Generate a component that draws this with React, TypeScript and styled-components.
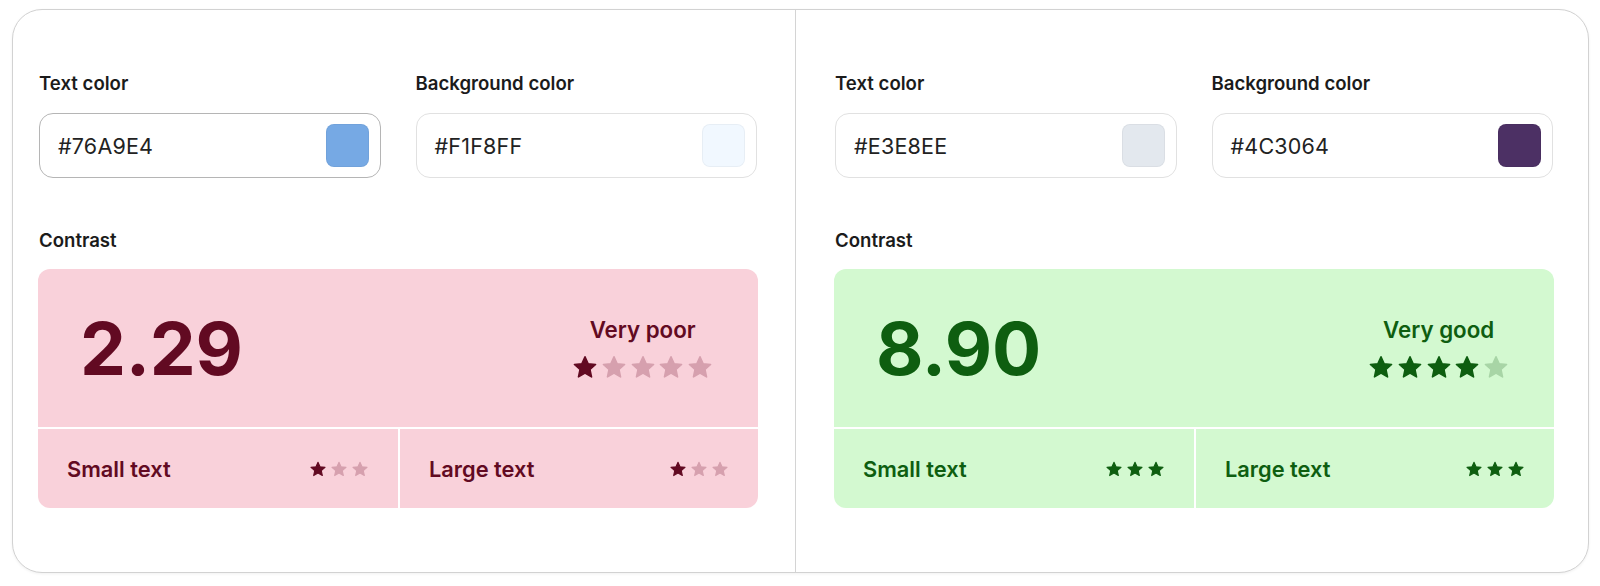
import React from "react";
import styled, { createGlobalStyle } from "styled-components";

const GlobalStyle = createGlobalStyle`
  html, body {
    margin: 0;
    padding: 0;
    background: #ffffff;
  }
  body {
    font-family: Inter, "Noto Sans", "Liberation Sans", sans-serif;
    -webkit-font-smoothing: antialiased;
  }
  * { box-sizing: border-box; }
`;

type Tone = {
  bg: string;
  ink: string;
  dim: string;
};

const TONES: Record<"bad" | "good", Tone> = {
  bad: { bg: "#f9d1da", ink: "#620a22", dim: "#d6a0ae" },
  good: { bg: "#d3f9d0", ink: "#0e5e10", dim: "#a8d5a6" },
};

const Page = styled.div`
  padding: 9px 11px 11px 12px;
`;

const Card = styled.div`
  display: grid;
  grid-template-columns: 782px 1fr;
  border: 1px solid #d2d2d2;
  border-radius: 30px;
  background: #ffffff;
  box-shadow: 0 1px 3px rgba(0, 0, 0, 0.06);
`;

const Column = styled.section<{ $divided?: boolean }>`
  display: flex;
  flex-direction: column;
  padding: ${(p) => (p.$divided ? "62px 35px 64px 39px" : "62px 38px 64px 26px")};
  border-left: ${(p) => (p.$divided ? "1px solid #d4d4d4" : "none")};
`;

const FieldRow = styled.div`
  display: grid;
  grid-template-columns: 1fr 1fr;
  column-gap: 35px;
`;

const Field = styled.div`
  display: flex;
  flex-direction: column;
  gap: 19px;
`;

const Label = styled.div`
  font-size: 18.6px;
  line-height: 22px;
  font-weight: 600;
  color: #1b1b1b;
`;

const ColorInput = styled.div<{ $focused?: boolean }>`
  height: 65px;
  display: flex;
  align-items: center;
  justify-content: space-between;
  padding: 0 11px 0 18px;
  border: 1px solid ${(p) => (p.$focused ? "#b5b5b5" : "#e1e1e1")};
  border-radius: 14px;
  background: #ffffff;
`;

const HexText = styled.span`
  font-size: 21.5px;
  font-weight: 400;
  color: #222222;
  letter-spacing: 0.2px;
`;

const Swatch = styled.span<{ $color: string }>`
  width: 43px;
  height: 43px;
  border-radius: 8px;
  background: ${(p) => p.$color};
  box-shadow: inset 0 0 0 1px rgba(0, 0, 0, 0.04);
`;

const ContrastSection = styled.div`
  display: flex;
  flex-direction: column;
  gap: 18px;
  margin-top: 51px;
`;

const ResultBox = styled.div<{ $tone: Tone }>`
  margin: 0 -1px;
  border-radius: 12px;
  overflow: hidden;
  background: ${(p) => p.$tone.bg};
  color: ${(p) => p.$tone.ink};
`;

const Summary = styled.div`
  height: 160px;
  display: flex;
  align-items: center;
  justify-content: space-between;
  padding: 0 46px 0 42px;
  border-bottom: 2px solid #ffffff;
`;

const Ratio = styled.div`
  font-size: 73px;
  line-height: 1;
  font-weight: 700;
  letter-spacing: -0.3px;
`;

const Verdict = styled.div`
  display: flex;
  flex-direction: column;
  align-items: center;
  gap: 12px;
`;

const VerdictText = styled.div`
  font-size: 22.3px;
  line-height: 26px;
  font-weight: 600;
`;

const StarRow = styled.div<{ $gap: number }>`
  display: flex;
  align-items: center;
  gap: ${(p) => p.$gap}px;
`;

const Levels = styled.div`
  height: 79px;
  display: grid;
  grid-template-columns: 1fr 1fr;
`;

const LevelCell = styled.div<{ $divided?: boolean }>`
  display: flex;
  align-items: center;
  justify-content: space-between;
  padding: 0 30px 0 29px;
  border-left: ${(p) => (p.$divided ? "2px solid #ffffff" : "none")};
`;

const LevelText = styled.span`
  font-size: 21.8px;
  font-weight: 600;
`;

// Five-pointed star with softened tips, centred in a 24-unit box
const STAR_POINTS = Array.from({ length: 10 }, (_, i) => {
  const angle = ((-90 + i * 36) * Math.PI) / 180;
  const r = i % 2 === 0 ? 11.1 : 5.2;
  return `${(12 + r * Math.cos(angle)).toFixed(2)},${(12.9 + r * Math.sin(angle)).toFixed(2)}`;
}).join(" ");

const Star = ({ size, color }: { size: number; color: string }) => (
  <svg width={size} height={size} viewBox="0 0 24 24" aria-hidden="true">
    <polygon
      points={STAR_POINTS}
      fill={color}
      stroke={color}
      strokeWidth={1.6}
      strokeLinejoin="round"
    />
  </svg>
);

const Stars = ({
  total,
  filled,
  size,
  gap,
  tone,
}: {
  total: number;
  filled: number;
  size: number;
  gap: number;
  tone: Tone;
}) => (
  <StarRow $gap={gap}>
    {Array.from({ length: total }, (_, i) => (
      <Star key={i} size={size} color={i < filled ? tone.ink : tone.dim} />
    ))}
  </StarRow>
);

type PanelData = {
  text: string;
  background: string;
  focused?: boolean;
  ratio: string;
  verdict: string;
  rating: number;
  small: number;
  large: number;
  tone: Tone;
};

const PANELS: PanelData[] = [
  {
    text: "#76A9E4",
    background: "#F1F8FF",
    focused: true,
    ratio: "2.29",
    verdict: "Very poor",
    rating: 1,
    small: 1,
    large: 1,
    tone: TONES.bad,
  },
  {
    text: "#E3E8EE",
    background: "#4C3064",
    ratio: "8.90",
    verdict: "Very good",
    rating: 4,
    small: 3,
    large: 3,
    tone: TONES.good,
  },
];

const Panel = ({ data, divided }: { data: PanelData; divided?: boolean }) => (
  <Column $divided={divided}>
    <FieldRow>
      <Field>
        <Label>Text color</Label>
        <ColorInput $focused={data.focused}>
          <HexText>{data.text}</HexText>
          <Swatch $color={data.text} />
        </ColorInput>
      </Field>
      <Field>
        <Label>Background color</Label>
        <ColorInput>
          <HexText>{data.background}</HexText>
          <Swatch $color={data.background} />
        </ColorInput>
      </Field>
    </FieldRow>
    <ContrastSection>
      <Label>Contrast</Label>
      <ResultBox $tone={data.tone}>
        <Summary>
          <Ratio>{data.ratio}</Ratio>
          <Verdict>
            <VerdictText>{data.verdict}</VerdictText>
            <Stars total={5} filled={data.rating} size={24} gap={4.7} tone={data.tone} />
          </Verdict>
        </Summary>
        <Levels>
          <LevelCell>
            <LevelText>Small text</LevelText>
            <Stars total={3} filled={data.small} size={16} gap={5} tone={data.tone} />
          </LevelCell>
          <LevelCell $divided>
            <LevelText>Large text</LevelText>
            <Stars total={3} filled={data.large} size={16} gap={5} tone={data.tone} />
          </LevelCell>
        </Levels>
      </ResultBox>
    </ContrastSection>
  </Column>
);

export default function App() {
  return (
    <>
      <GlobalStyle />
      <Page>
        <Card>
          <Panel data={PANELS[0]} />
          <Panel data={PANELS[1]} divided />
        </Card>
      </Page>
    </>
  );
}
